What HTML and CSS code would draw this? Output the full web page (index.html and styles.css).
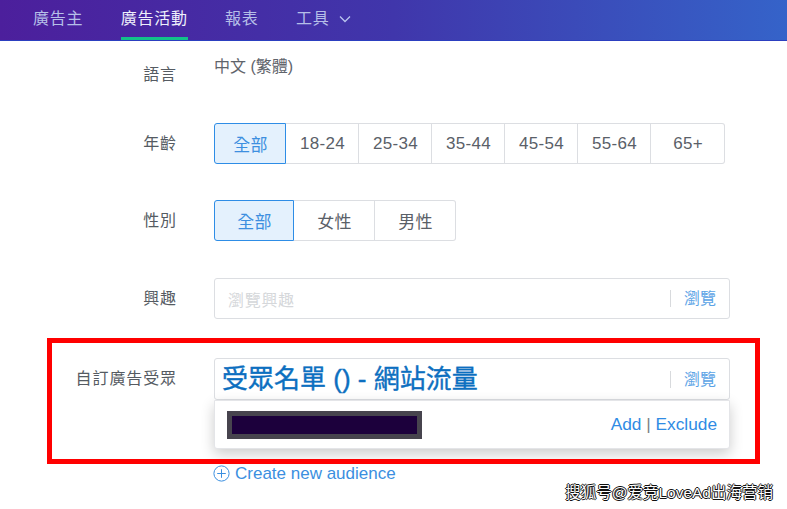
FILE: index.html
```html
<!DOCTYPE html>
<html lang="zh-Hant">
<head>
<meta charset="utf-8">
<title>廣告活動</title>
<link rel="stylesheet" href="styles.css">
</head>
<body>
<nav class="nav">
  <a class="tab">廣告主</a>
  <a class="tab active">廣告活動</a>
  <a class="tab">報表</a>
  <a class="tab tools">工具
    <svg class="chev" width="12" height="8" viewBox="0 0 12 8"><path d="M1 1.5 6 6.5l5-5" fill="none" stroke="#b9c4ee" stroke-width="1.3"/></svg>
  </a>
</nav>
<main class="form">
  <div class="row row-lang">
    <div class="label label-lang">語言</div>
    <div class="value">中文 (繁體)</div>
  </div>
  <div class="row row-age">
    <div class="label">年齡</div>
    <div class="group age">
      <button class="seg on">全部</button><button class="seg">18-24</button><button class="seg">25-34</button><button class="seg">35-44</button><button class="seg">45-54</button><button class="seg">55-64</button><button class="seg">65+</button>
    </div>
  </div>
  <div class="row row-gender">
    <div class="label">性別</div>
    <div class="group gender">
      <button class="seg on">全部</button><button class="seg">女性</button><button class="seg">男性</button>
    </div>
  </div>
  <div class="row row-interest">
    <div class="label">興趣</div>
    <div class="input">
      <span class="placeholder">瀏覽興趣</span>
      <span class="browse">瀏覽</span>
    </div>
  </div>
  <div class="row row-custom">
    <div class="label">自訂廣告受眾</div>
    <div class="custom">
      <div class="input input-custom">
        <span class="overlay-title">受眾名單 () - 網站流量</span>
        <span class="browse">瀏覽</span>
      </div>
      <div class="drop">
        <span class="redact"></span>
        <span class="actions"><a>Add</a> <i>|</i> <a>Exclude</a></span>
      </div>
      <a class="create">
        <svg width="17" height="17" viewBox="0 0 17 17"><circle cx="8.5" cy="8.5" r="7.6" fill="none" stroke="#3b8fe0" stroke-width="1"/><path d="M8.5 4.2v8.6M4.2 8.5h8.6" stroke="#3b8fe0" stroke-width="1" fill="none"/></svg>
        Create new audience
      </a>
    </div>
  </div>
</main>
<div class="redbox"></div>
<div class="mark">搜狐号@爱竞LoveAd出海营销</div>
</body>
</html>
```
FILE: styles.css
```css
* { box-sizing: border-box; }
html, body { margin: 0; height: 509px; overflow: hidden; }
body {
  position: relative;
  background: #fff;
  font-family: "Liberation Sans", "Noto Sans CJK TC", sans-serif;
  color: #5a6068;
}
.nav {
  height: 41px;
  display: flex;
  padding-left: 33px;
  background: linear-gradient(90deg, #4c1f9c 0%, #4036ab 50%, #3563c9 100%);
  border-bottom: 1px solid #2c3fc0;
}
.tab {
  height: 40px;
  line-height: 37px;
  font-size: 16px;
  letter-spacing: .75px;
  color: #b5bfe8;
  margin-right: 37.4px;
  white-space: nowrap;
}
.tab.active {
  color: #eef0fb;
  border-bottom: 3px solid #12c28a;
}
.tools { display: flex; align-items: flex-start; gap: 10px; }
.chev { margin-top: 15px; }
.form { padding-top: 16px; }
.row { display: flex; align-items: flex-start; }
.label {
  width: 177px;
  flex: none;
  text-align: right;
  font-size: 16px;
  letter-spacing: .9px;
  line-height: 22px;
  color: #555b62;
  margin-right: 37px;
  padding-top: 10px;
}
.label-lang { padding-top: 7px; }
.value { font-size: 16px; line-height: 20px; color: #5f646b; }
.row-lang { height: 66px; }
.row-age { height: 77px; }
.row-gender { height: 78px; }
.row-interest { height: 80px; }
.group { display: flex; height: 41px; }
.seg {
  font-family: inherit;
  font-size: 17px;
  letter-spacing: .3px;
  color: #5a6068;
  background: #fff;
  border: 1px solid #dcdee2;
  border-left: 0;
  height: 100%;
  padding: 0 0 0 1px;
}
.seg:last-child { border-radius: 0 3px 3px 0; }
.seg.on {
  color: #3d8fe0;
  background: #e4f1fd;
  border: 1px solid #2e8de6;
  border-radius: 3px 0 0 3px;
}
.age .seg { width: 73px; }
.age .seg.on { width: 72px; }
.age .seg:last-child { width: 74px; }
.gender .seg { width: 81px; }
.gender .seg.on { width: 80px; }
.input {
  width: 516px;
  height: 41px;
  display: flex;
  align-items: center;
  justify-content: space-between;
  border: 1px solid #dcdee2;
  border-radius: 3px;
  background: #fff;
  padding: 0 13px;
}
.placeholder { font-size: 16px; letter-spacing: .7px; color: #d5d7da; }
.browse {
  font-size: 16px;
  line-height: 17px;
  color: #5ba3e6;
  border-left: 1px solid #d8dadd;
  padding-left: 13px;
}
.input-custom { height: 42px; padding-left: 7px; }
.overlay-title {
  font-size: 26px;
  line-height: 34px;
  color: #0c6fc0;
  white-space: nowrap;
  -webkit-text-stroke: .4px #0c6fc0;
}
.drop {
  width: 516px;
  height: 49px;
  display: flex;
  align-items: center;
  justify-content: space-between;
  padding: 0 12px;
  background: #fff;
  border: 1px solid #e4e5e8;
  border-radius: 0 0 3px 3px;
  box-shadow: 0 5px 14px rgba(0, 0, 0, .2);
}
.redact {
  width: 195px;
  height: 28px;
  background: #1c003c;
  border: 5px solid #47444e;
}
.actions { font-size: 17.3px; color: #2f8be4; }
.actions i { font-style: normal; color: #7b7f85; }
.create {
  display: flex;
  align-items: center;
  gap: 5px;
  margin-top: 15px;
  font-size: 17px;
  line-height: 20px;
  color: #3b8fe0;
}
.create svg { margin: -2px 0 0 -1px; }
.redbox {
  position: absolute;
  left: 47px;
  top: 338px;
  width: 713px;
  height: 126px;
  border: 5px solid #ff0000;
  pointer-events: none;
}
.mark {
  position: absolute;
  right: 14px;
  top: 483px;
  font-family: "Liberation Sans", "Noto Sans CJK SC", sans-serif;
  font-size: 15.5px;
  line-height: 20px;
  color: #fff;
  text-shadow: -1px 0 0 #111, 1px 0 0 #111, 0 -1px 0 #111, 0 1px 0 #111;
  white-space: nowrap;
}
```
